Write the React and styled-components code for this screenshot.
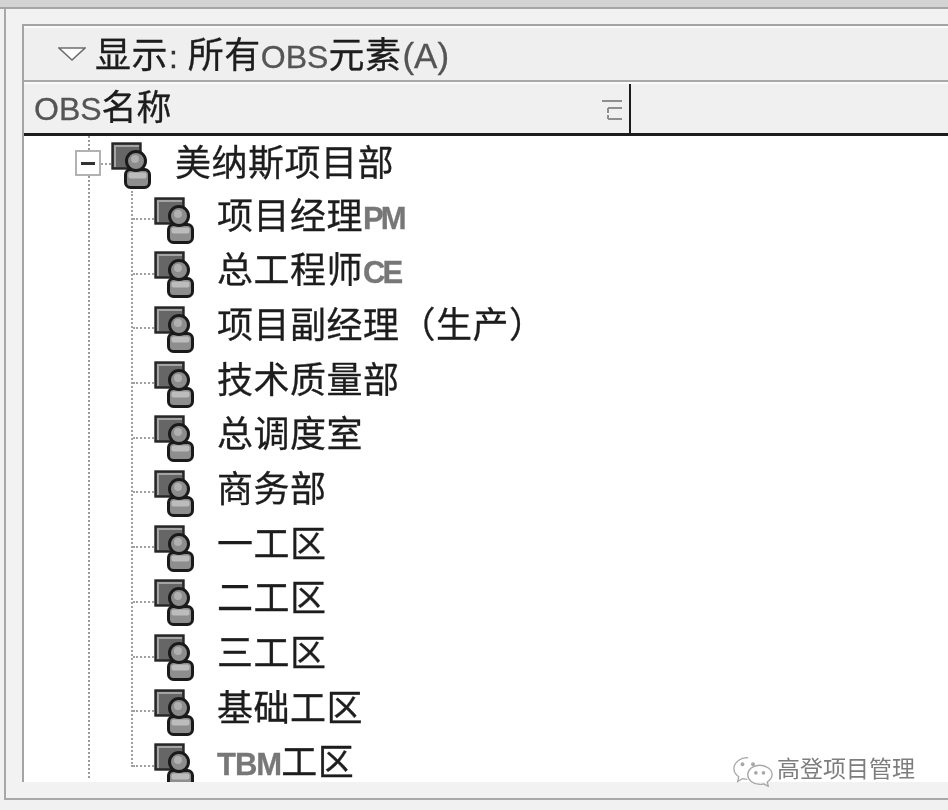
import React from "react";
import styled, { createGlobalStyle } from "styled-components";

const Global = createGlobalStyle`
  html, body { margin: 0; padding: 0; background: #f1f1f1; }
  body { width: 948px; height: 810px; overflow: hidden; }
`;

const FONT = `"Liberation Sans", "Noto Sans CJK SC", sans-serif`;

const Window = styled.div`
  width: 948px;
  height: 810px;
  display: flex;
  flex-direction: column;
  overflow: hidden;
  position: relative;
  background: #f1f1f1;
  font-family: ${FONT};
  color: #1d1d1d;
  filter: blur(0.7px);
`;

const TopStrip = styled.div`
  height: 7px;
  flex: none;
  background: #d3d3d3;
  border-bottom: 2px solid #a6a6a6;
`;

const Frame = styled.div`
  flex: none;
  height: 791px;
  margin-left: 4px;
  border-left: 2px solid #a8a8a8;
  border-bottom: 2px solid #a8a8a8;
  padding: 15px 0 16px 16px;
  box-sizing: border-box;
  display: flex;
  flex-direction: column;
  background: #f2f2f2;
`;

const Panel = styled.div`
  flex: 1;
  min-height: 0;
  display: flex;
  flex-direction: column;
  border-top: 2px solid #a4a4a4;
  border-left: 2px solid #a4a4a4;
  background: #fff;
`;

const FilterBar = styled.div`
  height: 56px;
  flex: none;
  display: flex;
  align-items: center;
  padding: 0 0 4px 34px;
  gap: 9px;
  background: #efefef;
  border-top: 2px solid #fafafa;
  box-sizing: border-box;
  border-bottom: 2px solid #a8a8a8;
  font-size: 36px;
  letter-spacing: 0.5px;
  -webkit-text-stroke: 0.3px #1d1d1d;
`;

const Latin = styled.span`
  font-size: ${(p) => p.$size}px;
  font-weight: ${(p) => (p.$bold ? 700 : 400)};
  color: ${(p) => p.$color || "#555"};
  letter-spacing: ${(p) => p.$spacing || 0}px;
  margin: 0 ${(p) => p.$pad || 0}px;
  -webkit-text-stroke: 0.3px ${(p) => p.$color || "#555"};
`;

const ColumnHeader = styled.div`
  height: 54px;
  flex: none;
  display: flex;
  background: #f0f0f0;
  border-top: 2px solid #fafafa;
  border-bottom: 3px solid #1c1c1c;
  box-sizing: border-box;
`;

const NameColumn = styled.div`
  width: 607px;
  flex: none;
  display: flex;
  align-items: center;
  justify-content: space-between;
  padding: 0 7px 2px 10px;
  box-sizing: border-box;
  border-right: 2px solid #1c1c1c;
  line-height: 1;
  white-space: nowrap;
`;

const ColumnTitle = styled.span`
  font-size: 35px;
  -webkit-text-stroke: 0.3px #1d1d1d;
`;

const Tree = styled.div`
  flex: 1;
  min-height: 0;
  overflow: hidden;
  padding-left: 64px;
  display: flex;
  flex-direction: column;
`;

const Trunk = styled.div`
  border-left: 2px dotted #9a9a9a;
  height: 642px;
  flex: none;
  font-size: 36px;
  letter-spacing: 0.5px;
`;

const Row = styled.div`
  height: 54.7px;
  display: flex;
  align-items: center;
  white-space: nowrap;
  line-height: 1;
`;

const ExpandBox = styled.div`
  width: 26px;
  height: 26px;
  flex: none;
  box-sizing: border-box;
  margin-left: -15px;
  border: 2px solid #b2b2b2;
  background: #fff;
  display: flex;
  align-items: center;
  justify-content: center;
  &::before {
    content: "";
    width: 14px;
    height: 3px;
    background: #333;
  }
`;

const Stub = styled.div`
  width: ${(p) => p.$w}px;
  flex: none;
  border-top: 2px dotted #a0a0a0;
  align-self: center;
  margin-top: 2px;
`;

const Label = styled.span`
  margin-left: ${(p) => p.$gap}px;
  margin-top: ${(p) => p.$top || 0}px;
  color: #1d1d1d;
  -webkit-text-stroke: 0.3px #1d1d1d;
`;

const Branch = styled.div`
  margin-left: 41px;
  height: 576px;
  border-left: 2px dotted #a0a0a0;
`;

const IconSvg = styled.svg`
  flex: none;
  margin-top: 2px;
  margin-bottom: -2px;
`;

const Chevron = styled.svg`
  flex: none;
  margin-top: 4px;
`;

const SortSvg = styled.svg`
  flex: none;
  margin-top: 6px;
`;

const Footer = styled.div`
  position: absolute;
  right: 33px;
  top: 751px;
  display: flex;
  align-items: center;
  gap: 3px;
  font-size: 23px;
  color: #7d7d7d;
  line-height: 1;
`;

const FooterIcon = styled.svg`
  flex: none;
  margin-top: 4px;
`;

function OrgIcon() {
  return (
    <IconSvg width="42" height="47" viewBox="0 0 42 47">
      <rect x="1.500" y="1.500" width="28" height="25" fill="#666" stroke="#262626" strokeWidth="2.400" />
      <path d="M3 3h25v2H5v20H3z" fill="#a4a4a4" />
      <rect x="14.500" y="27.500" width="24" height="18" rx="5" fill="#8e8e8e" stroke="#1a1a1a" strokeWidth="3" />
      <rect x="17.500" y="30.500" width="18" height="6" rx="2" fill="#bcbcbc" />
      <circle cx="25" cy="19" r="9.500" fill="#8c8c8c" stroke="#1a1a1a" strokeWidth="3" />
      <circle cx="24" cy="17" r="4" fill="#b0b0b0" />
    </IconSvg>
  );
}

function ChevronDown() {
  return (
    <Chevron width="28" height="16" viewBox="0 0 28 16">
      <path d="M1 2h26L14 14z" fill="#fdfdfd" stroke="#6e6e6e" strokeWidth="1.600" />
    </Chevron>
  );
}

function SortGlyph() {
  return (
    <SortSvg width="20" height="24" viewBox="0 0 20 24">
      <path d="M0 2h20M6 9h14M6 9v5M6 20h14M6 16v4" stroke="#8f8f8f" strokeWidth="2" fill="none" />
    </SortSvg>
  );
}

function WeChat() {
  return (
    <FooterIcon width="42" height="32" viewBox="0 0 44 32" fill="none" stroke="#a8a8a8" strokeWidth="1.400">
      <path d="M17 2C8 2 2 7.500 2 13.500c0 3.500 2 6.500 5 8.500l-1 5 5-3c2 .6 3.500.8 5 .8" />
      <path d="M29 10c-7 0-12.500 4.500-12.500 10S22 30 29 30c1.500 0 3-.2 4-.6l5 2.600-1-4.500c3-2 5-4.500 5-7.500 0-5.500-6-10-13-10z" />
      <circle cx="11" cy="9" r="1.400" fill="#a8a8a8" />
      <circle cx="22" cy="9" r="1.400" fill="#a8a8a8" />
      <circle cx="25" cy="18" r="1.200" fill="#a8a8a8" />
      <circle cx="33" cy="18" r="1.200" fill="#a8a8a8" />
    </FooterIcon>
  );
}

const children = [
  { zh: "项目经理", latin: "PM", spacing: -3 },
  { zh: "总工程师", latin: "CE", spacing: -3 },
  { zh: "项目副经理（生产）" },
  { zh: "技术质量部" },
  { zh: "总调度室" },
  { zh: "商务部" },
  { zh: "一工区" },
  { zh: "二工区" },
  { zh: "三工区" },
  { zh: "基础工区" },
  { pre: "TBM", zh: "工区", spacing: -1 },
];

export default function App() {
  return (
    <Window>
      <Global />
      <TopStrip />
      <Frame>
        <Panel>
          <FilterBar>
            <ChevronDown />
            <span>
              显示<Latin $size={32} $color="#333" $pad={1}>: </Latin>所有<Latin $size={32}>OBS</Latin>元素<Latin $size={35} $pad={1}>(A)</Latin>
            </span>
          </FilterBar>
          <ColumnHeader>
            <NameColumn>
              <span>
                <Latin $size={32}>OBS</Latin>
                <ColumnTitle>名称</ColumnTitle>
              </span>
              <SortGlyph />
            </NameColumn>
          </ColumnHeader>
          <Tree>
            <Trunk>
              <Row>
                <ExpandBox />
                <Stub $w={10} />
                <OrgIcon />
                <Label $gap={22} $top={2}>美纳斯项目部</Label>
              </Row>
              <Branch>
                {children.map((c) => (
                  <Row key={c.zh + (c.pre || "")}>
                    <Stub $w={21} />
                    <OrgIcon />
                    <Label $gap={21} $top={-3}>
                      {c.pre && <Latin $size={31} $bold $color="#777" $spacing={c.spacing}>{c.pre}</Latin>}
                      {c.zh}
                      {c.latin && <Latin $size={31} $bold $color="#777" $spacing={c.spacing}>{c.latin}</Latin>}
                    </Label>
                  </Row>
                ))}
              </Branch>
            </Trunk>
          </Tree>
        </Panel>
      </Frame>
      <Footer>
        <WeChat />
        <span>高登项目管理</span>
      </Footer>
    </Window>
  );
}
